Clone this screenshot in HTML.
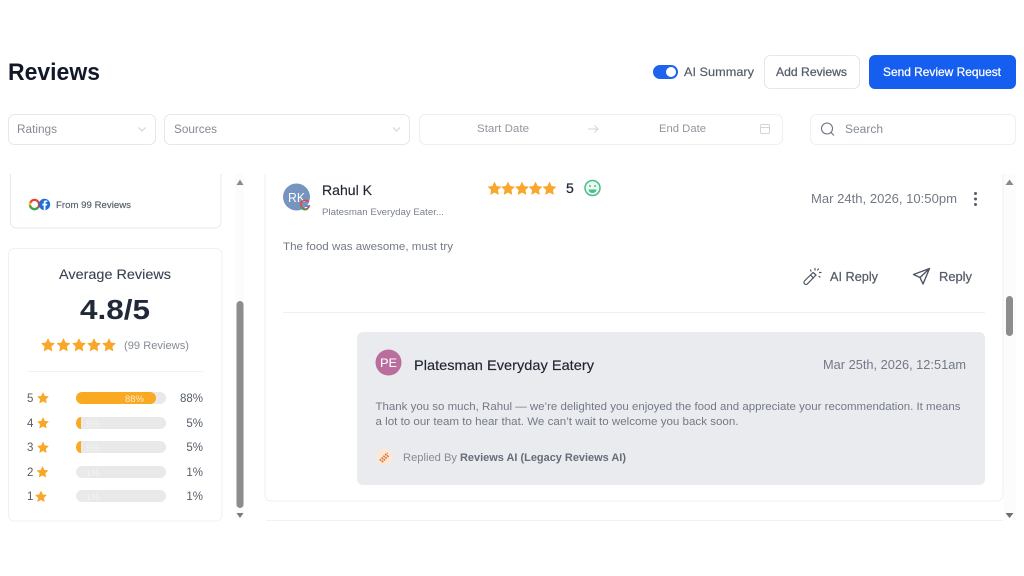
<!DOCTYPE html>
<html lang="en"><head><meta charset="utf-8"><title>Reviews</title>
<style>
html,body{margin:0;padding:0;background:#fff;width:1024px;height:576px;overflow:hidden}
svg{display:block;filter:blur(.35px)}
text{font-family:"Liberation Sans",sans-serif;white-space:pre}
</style></head><body>
<svg width="1024" height="576" viewBox="0 0 1024 576" xmlns="http://www.w3.org/2000/svg">
<defs>
<path id="s" d="M0-6.300 1.900-2.200 6.300-1.600 3.100 1.400 3.900 5.900 0 3.700-3.900 5.900-3.100 1.400-6.300-1.600-1.900-2.200Z" fill="#f9a72b" stroke="#f9a72b" stroke-width=".6" stroke-linejoin="round"/>
</defs>
<rect width="1024" height="576" fill="#fff"/>

<!-- header -->
<text x="8" y="80" font-size="24" font-weight="700" fill="#111827" textLength="92" lengthAdjust="spacingAndGlyphs">Reviews</text>
<rect x="653" y="65" width="25" height="14" rx="7" fill="#1d63ed"/>
<circle cx="671" cy="72" r="5" fill="#fff"/>
<text x="684" y="76" font-size="12" fill="#565d69" stroke="#565d69" stroke-width=".2" textLength="70" lengthAdjust="spacingAndGlyphs">AI Summary</text>
<rect x="764.500" y="55.500" width="95" height="33" rx="6" fill="#fff" stroke="#e5e7eb"/>
<text x="776" y="76" font-size="12" fill="#565d69" stroke="#565d69" stroke-width=".25" textLength="71" lengthAdjust="spacingAndGlyphs">Add Reviews</text>
<rect x="869" y="55" width="147" height="34" rx="6" fill="#155eef"/>
<text x="883" y="76" font-size="12" fill="#fff" stroke="#fff" stroke-width=".25" textLength="118" lengthAdjust="spacingAndGlyphs">Send Review Request</text>

<!-- filters -->
<g fill="#fff" stroke="#e5e7eb">
<rect x="8.500" y="114.500" width="147" height="30" rx="6"/>
<rect x="164.500" y="114.500" width="245" height="30" rx="6"/>
<rect x="419.500" y="114.500" width="363" height="30" rx="6" stroke="#eeeff1"/>
<rect x="810.500" y="114.500" width="205" height="30" rx="6" stroke="#eeeff1"/>
</g>
<text x="17" y="133" font-size="11.500" fill="#868b94" textLength="40" lengthAdjust="spacingAndGlyphs">Ratings</text>
<path d="M138.500 127.500 142 131 145.500 127.500" fill="none" stroke="#d0d2d6"/>
<text x="174" y="133" font-size="11.500" fill="#868b94" textLength="43" lengthAdjust="spacingAndGlyphs">Sources</text>
<path d="M393 127.500 396.500 131 400 127.500" fill="none" stroke="#d0d2d6"/>
<text x="477" y="132" font-size="11" fill="#92969e" textLength="52" lengthAdjust="spacingAndGlyphs">Start Date</text>
<path d="M588 129H598M594.500 125.500 598 129 594.500 132.500" fill="none" stroke="#d3d5d9"/>
<text x="659" y="132" font-size="11" fill="#92969e" textLength="47" lengthAdjust="spacingAndGlyphs">End Date</text>
<g fill="none" stroke="#d3d5d9"><rect x="760.500" y="124.500" width="9" height="9" rx="1"/><path d="M760.500 127.500H769.500"/></g>
<circle cx="827" cy="128.500" r="5.500" fill="none" stroke="#6b7280" stroke-width="1.100"/>
<path d="M831 132.500 834 135.500" stroke="#6b7280" stroke-width="1.100"/>
<text x="845" y="133" font-size="11.500" fill="#868b94" textLength="38" lengthAdjust="spacingAndGlyphs">Search</text>

<!-- left card top (clipped) -->
<path d="M10.500 174V222a6 6 0 0 0 6 6H215a6 6 0 0 0 6-6V174" fill="#fff" stroke="#e7e8eb"/>
<circle cx="34.500" cy="204.500" r="4.600" fill="none" stroke="#ea4335" stroke-width="2.200"/>
<path d="M37.800 207.700A4.600 4.600 0 0 1 30 205.500" fill="none" stroke="#34a853" stroke-width="2.200"/>
<path d="M30.300 202.500a4.600 4.600 0 0 0-.4 3" fill="none" stroke="#fbbc05" stroke-width="2.200"/>
<circle cx="44.500" cy="204.500" r="5.700" fill="#1d6fd8"/>
<path d="M45.500 210.200V205.500H47L47.300 203.800H45.500V202.800C45.500 202.200 45.800 202 46.400 202H47.300V200.500H45.800C44.300 200.500 43.700 201.300 43.700 202.600V203.800H42.300V205.500H43.700V210.200Z" fill="#fff"/>
<text x="56" y="208" font-size="9" fill="#565d69" stroke="#565d69" stroke-width=".15" textLength="75" lengthAdjust="spacingAndGlyphs">From 99 Reviews</text>

<!-- average card -->
<rect x="8.500" y="248.500" width="213.500" height="272.500" rx="6" fill="#fff" stroke="#eff0f2"/>
<text x="59" y="279" font-size="14" fill="#374151" stroke="#374151" stroke-width=".1" textLength="112" lengthAdjust="spacingAndGlyphs">Average Reviews</text>
<text x="80" y="319" font-size="28" font-weight="700" fill="#1f2937" textLength="70" lengthAdjust="spacingAndGlyphs">4.8/5</text>
<use href="#s" x="48" y="345"/><use href="#s" x="63.500" y="345"/><use href="#s" x="79" y="345"/><use href="#s" x="94" y="345"/><use href="#s" x="109" y="345"/>
<text x="124" y="349" font-size="11" fill="#868b94" textLength="65" lengthAdjust="spacingAndGlyphs">(99 Reviews)</text>
<path d="M27 371.500H203" stroke="#f2f3f4"/>

<g font-size="11.500" fill="#565d69">
<text x="27" y="402">5</text><text x="27" y="427">4</text><text x="27" y="451">3</text><text x="27" y="476">2</text><text x="27" y="500">1</text>
</g>
<g transform="translate(43 398) scale(.85)"><use href="#s"/></g>
<g transform="translate(43 423) scale(.85)"><use href="#s"/></g>
<g transform="translate(43 447.500) scale(.85)"><use href="#s"/></g>
<g transform="translate(42.500 472) scale(.85)"><use href="#s"/></g>
<g transform="translate(41 496.500) scale(.85)"><use href="#s"/></g>

<g fill="#e9e9e9">
<rect x="76" y="392" width="90" height="12" rx="6"/>
<rect x="76" y="417" width="90" height="12" rx="6"/>
<rect x="76" y="441" width="90" height="12" rx="6"/>
<rect x="76" y="466" width="90" height="12" rx="6"/>
<rect x="76" y="490" width="90" height="12" rx="6"/>
</g>
<rect x="76" y="392" width="80" height="12" rx="6" fill="#faa923"/>
<path d="M81 417V429A5 6 0 0 1 81 417Z" fill="#faa923"/>
<path d="M81 441V453A5 6 0 0 1 81 441Z" fill="#faa923"/>
<g font-size="9.500" fill="#fff">
<text x="125" y="402" fill-opacity=".75" textLength="19" lengthAdjust="spacingAndGlyphs">88%</text>
<text x="86" y="427" fill-opacity=".5">5%</text><text x="86" y="451" fill-opacity=".5">5%</text>
<text x="86" y="476" fill-opacity=".5">1%</text><text x="86" y="500" fill-opacity=".5">1%</text>
</g>
<g font-size="11.500" fill="#565d69" text-anchor="end">
<text x="203" y="402">88%</text><text x="203" y="427">5%</text><text x="203" y="451">5%</text><text x="203" y="476">1%</text><text x="203" y="500">1%</text>
</g>

<!-- left scrollbar -->
<rect x="235" y="174" width="9" height="346" fill="#fcfcfc"/>
<path d="M236.500 185 240 179.500 243.500 185Z" fill="#8a8a8a"/>
<rect x="236.500" y="301" width="7" height="207" rx="3.500" fill="#8d8d8d"/>
<path d="M236.500 513 240 518 243.500 513Z" fill="#7a7a7a"/>

<!-- main card -->
<path d="M265 174V495a6 6 0 0 0 6 6H997a6 6 0 0 0 6-6V174" fill="#fff" stroke="#eeeff1"/>
<path d="M266 520.500H1003" stroke="#f0f1f3"/>

<!-- right scrollbar -->
<rect x="1004" y="174" width="12" height="346" fill="#fcfcfc"/>
<path d="M1005.500 185 1009.500 179.500 1013.500 185Z" fill="#8a8a8a"/>
<rect x="1006" y="296" width="7" height="40" rx="3.500" fill="#8d8d8d"/>
<path d="M1005.500 513 1009.500 518 1013.500 513Z" fill="#6f6f6f"/>

<!-- review head -->
<circle cx="296.500" cy="197" r="13.500" fill="#7594bf"/>
<text x="288" y="202" font-size="13" fill="#fff" textLength="17" lengthAdjust="spacingAndGlyphs">RK</text>
<path d="M308.700 202.200A4.300 4.300 0 1 0 309.300 206H305.500" fill="none" stroke="#ea4335" stroke-width="1.500"/>
<path d="M301.100 207A4.300 4.300 0 0 0 308 208.600" fill="none" stroke="#34a853" stroke-width="1.500"/>
<path d="M309.300 206H305.500" fill="none" stroke="#4285f4" stroke-width="1.500"/>
<text x="322" y="195" font-size="14" fill="#1f2430" stroke="#1f2430" stroke-width=".15" textLength="50" lengthAdjust="spacingAndGlyphs">Rahul K</text>
<text x="322" y="215" font-size="9" fill="#7b818b" textLength="122" lengthAdjust="spacingAndGlyphs">Platesman Everyday Eater...</text>
<use href="#s" x="494.500" y="188.500"/><use href="#s" x="508" y="188.500"/><use href="#s" x="522" y="188.500"/><use href="#s" x="535.500" y="188.500"/><use href="#s" x="549.500" y="188.500"/>
<text x="566" y="193" font-size="14" fill="#1f2937" stroke="#1f2937" stroke-width=".25">5</text>
<circle cx="592.500" cy="188" r="7.500" fill="#eafaf2" stroke="#4cbd8a" stroke-width="1.500"/>
<circle cx="590" cy="186" r="1" fill="#4cbd8a"/><circle cx="595" cy="186" r="1" fill="#4cbd8a"/>
<path d="M588.500 189.500H596.500A4 3.500 0 0 1 588.500 189.500Z" fill="#4cbd8a"/>
<text x="811" y="203" font-size="12.500" fill="#737985" textLength="146" lengthAdjust="spacingAndGlyphs">Mar 24th, 2026, 10:50pm</text>
<g fill="#565d69"><circle cx="975.500" cy="193.500" r="1.500"/><circle cx="975.500" cy="199" r="1.500"/><circle cx="975.500" cy="204.500" r="1.500"/></g>

<text x="283" y="250" font-size="11" fill="#737985" textLength="170" lengthAdjust="spacingAndGlyphs">The food was awesome, must try</text>

<!-- actions -->
<g fill="none" stroke="#4b5563" stroke-width="1.200" stroke-linecap="round" stroke-linejoin="round">
<path d="M804.500 281 813 272.500 816 275 807.500 283.800A1.800 1.800 0 0 1 804.500 281ZM810.500 275 813.500 278"/>
<path d="M815 268.500V270M819.500 272.500H821M818.500 269 817.500 270M810.500 270 811 271M819 276.500 820 277"/>
<path d="M929.500 268.500 913.500 274.500 920 277.500 923 284ZM920 277.500 929.500 268.500" stroke-width="1.400"/>
</g>
<text x="830" y="281" font-size="12.500" fill="#565d69" stroke="#565d69" stroke-width=".25" textLength="48" lengthAdjust="spacingAndGlyphs">AI Reply</text>
<text x="939" y="281" font-size="12.500" fill="#565d69" stroke="#565d69" stroke-width=".25" textLength="33" lengthAdjust="spacingAndGlyphs">Reply</text>
<path d="M283 312.500H985" stroke="#eeeff1"/>

<!-- reply box -->
<rect x="357" y="332" width="628" height="153" rx="6" fill="#e9ebef"/>
<circle cx="388.500" cy="362.500" r="13" fill="#b96e9e"/>
<text x="380" y="367" font-size="12" fill="#fff" stroke="#fff" stroke-width=".1" textLength="17" lengthAdjust="spacingAndGlyphs">PE</text>
<text x="414" y="370" font-size="14" fill="#1f2430" stroke="#1f2430" stroke-width=".15" textLength="180" lengthAdjust="spacingAndGlyphs">Platesman Everyday Eatery</text>
<text x="823" y="369" font-size="12.500" fill="#737985" textLength="143" lengthAdjust="spacingAndGlyphs">Mar 25th, 2026, 12:51am</text>
<text x="375.500" y="410" font-size="11" fill="#737985" textLength="585" lengthAdjust="spacingAndGlyphs">Thank you so much, Rahul — we’re delighted you enjoyed the food and appreciate your recommendation. It means</text>
<text x="375.500" y="425" font-size="11" fill="#737985" textLength="363" lengthAdjust="spacingAndGlyphs">a lot to our team to hear that. We can’t wait to welcome you back soon.</text>
<circle cx="384.500" cy="457" r="8" fill="#fde8d4"/>
<path d="M380 460.500 387.500 453M382 462 389 455" stroke="#d9703a" stroke-width="2" stroke-dasharray="1.500 1"/>
<text x="403" y="461" font-size="11" fill="#868b94" textLength="54" lengthAdjust="spacingAndGlyphs">Replied By</text>
<text x="460" y="461" font-size="11" font-weight="700" fill="#666d79" textLength="166" lengthAdjust="spacingAndGlyphs">Reviews AI (Legacy Reviews AI)</text>
</svg>
</body></html>
